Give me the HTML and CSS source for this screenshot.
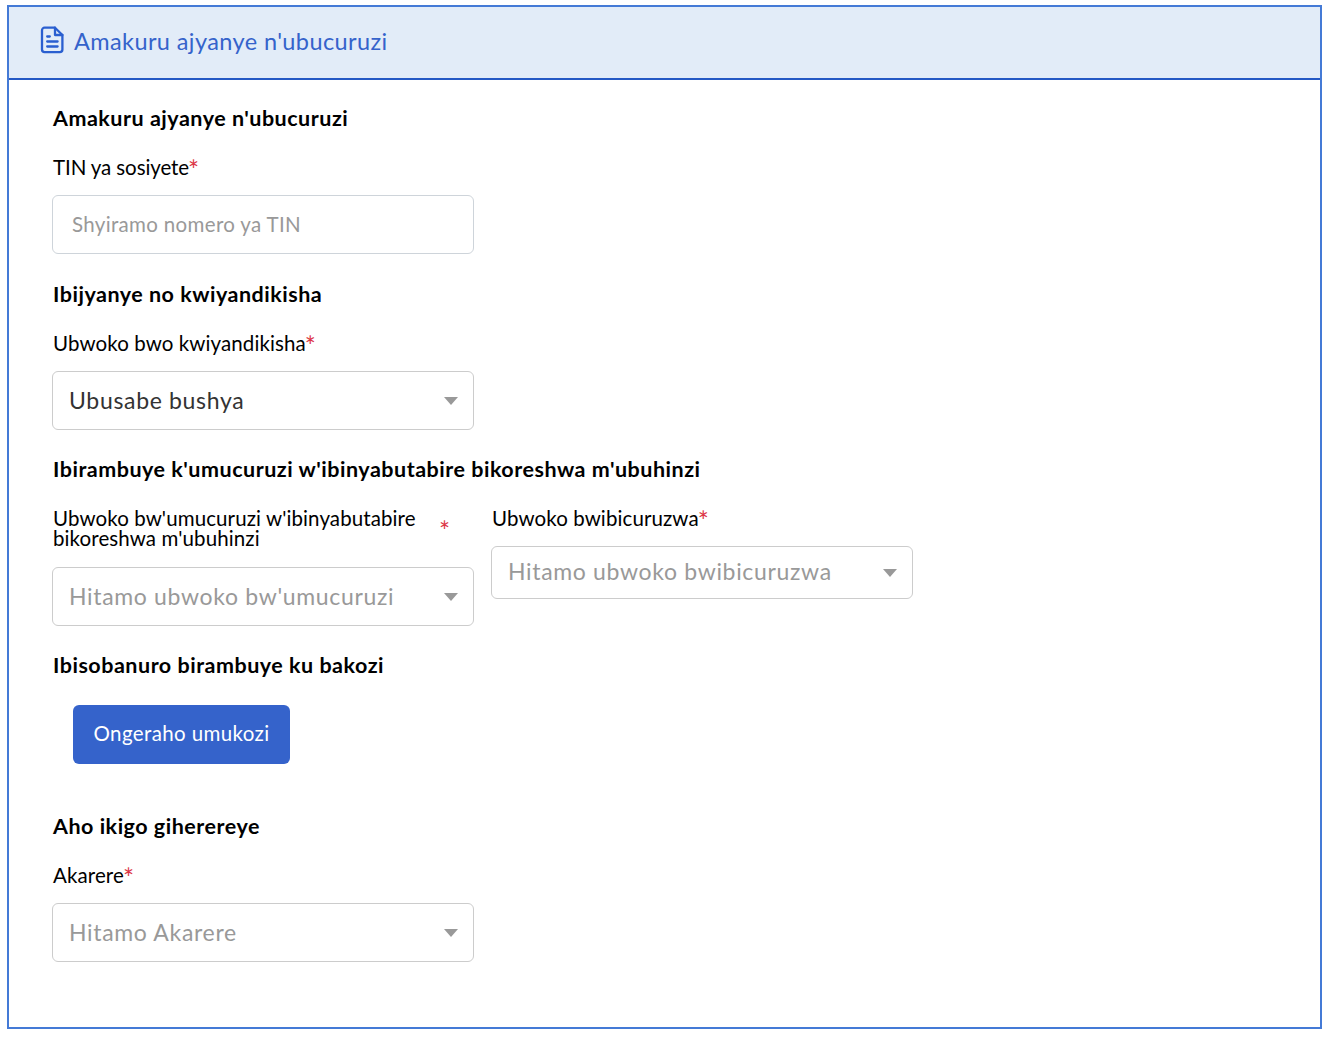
FILE: index.html
```html
<!DOCTYPE html>
<html lang="rw">
<head>
    <meta charset="UTF-8">
    <meta name="viewport" content="width=device-width, initial-scale=1.0">
    <title>Amakuru ajyanye n'ubucuruzi</title>
    <link rel="stylesheet" href="styles.css">
</head>
<body>
    <div class="panel">
        <div class="panel-header">
            <svg class="file-icon" viewBox="0 0 24 28" fill="none" stroke="currentColor" stroke-width="2.3" stroke-linecap="round" stroke-linejoin="round">
                <path d="M15 1.7H4.6A2.6 2.6 0 0 0 2 4.3v19.2a2.6 2.6 0 0 0 2.6 2.6h15.2a2.6 2.6 0 0 0 2.6-2.6V9z"/>
                <path d="M15 1.7V9h7.4M7.2 10.5h2.6M7.2 15.5h10.4M7.2 20.5h10.4"/>
            </svg>
            <span class="panel-title">Amakuru ajyanye n'ubucuruzi</span>
        </div>
        <form class="panel-body">
            <h3>Amakuru ajyanye n'ubucuruzi</h3>
            <div class="field">
                <label for="tin" class="tin-label"><span>TIN ya sosiyete</span><b>*</b></label>
                <input type="text" id="tin" class="control" placeholder="Shyiramo nomero ya TIN">
            </div>

            <h3>Ibijyanye no kwiyandikisha</h3>
            <div class="field type-field">
                <label><span>Ubwoko bwo kwiyandikisha</span><b>*</b></label>
                <div class="control select selected"><span>Ubusabe bushya</span><i class="arrow"></i></div>
            </div>

            <h3>Ibirambuye k'umucuruzi w'ibinyabutabire bikoreshwa m'ubuhinzi</h3>
            <div class="row">
                <div class="field">
                    <label class="long"><span>Ubwoko bw'umucuruzi w'ibinyabutabire bikoreshwa m'ubuhinzi</span><b>*</b></label>
                    <div class="control select"><span>Hitamo ubwoko bw'umucuruzi</span><i class="arrow"></i></div>
                </div>
                <div class="field">
                    <label><span>Ubwoko bwibicuruzwa</span><b>*</b></label>
                    <div class="control select short"><span>Hitamo ubwoko bwibicuruzwa</span><i class="arrow"></i></div>
                </div>
            </div>

            <h3>Ibisobanuro birambuye ku bakozi</h3>
            <button type="button" class="add-btn">Ongeraho umukozi</button>

            <h3>Aho ikigo giherereye</h3>
            <div class="field">
                <label><span>Akarere</span><b>*</b></label>
                <div class="control select"><span>Hitamo Akarere</span><i class="arrow"></i></div>
            </div>
        </form>
    </div>
</body>
</html>
```
FILE: styles.css
```css
* {
    box-sizing: border-box;
}
body {
    margin: 0;
    background: #fff;
    color: #000;
    font-family: Lato, "Open Sans", sans-serif;
}
.panel {
    width: 1315px;
    height: 1024px;
    margin: 5px 0 0 7px;
    border: 2px solid #447ad6;
}
.panel-header {
    display: flex;
    align-items: center;
    height: 73px;
    padding: 0 0 4px 31px;
    background: #e2ecf8;
    border-bottom: 2px solid #2458c4;
    color: #3563cb;
}
.file-icon {
    width: 24px;
    height: 28px;
    margin: 0 10px 1px 0;
    color: #2a5fd0;
}
.panel-title {
    font-size: 23.5px;
    letter-spacing: 0.4px;
}
.panel-body {
    padding: 26px 43px 0;
}
h3 {
    margin: 0 0 27px 1px;
    font-size: 21.5px;
    line-height: 24px;
    letter-spacing: 0.51px;
}
.field {
    width: 422px;
    margin-bottom: 28px;
}
.type-field {
    margin-bottom: 27px;
}
label {
    display: flex;
    margin: 0 0 18px 1px;
    font-size: 20.5px;
    line-height: 20px;
    letter-spacing: 0.1px;
}
label b {
    margin: 0 0 -6px -1px;
    color: #dc3545;
    font-size: 26px;
    font-weight: normal;
    line-height: 26px;
}
.tin-label {
    letter-spacing: -0.1px;
}
.long {
    margin-bottom: 19px;
}
.long span {
    width: 387px;
}
.long b {
    align-self: center;
}
.control {
    display: flex;
    align-items: center;
    justify-content: space-between;
    width: 100%;
    height: 59px;
    padding: 0 15px 0 16px;
    border: 1px solid #ccc;
    border-radius: 6px;
    background: #fff;
    color: #999;
    font-family: inherit;
    font-size: 23px;
    letter-spacing: 0.67px;
}
.select span {
    padding-bottom: 2px;
}
input.control {
    padding: 0 19px 2px;
    border-color: #ced4da;
    font-size: 20.5px;
    letter-spacing: 0.33px;
}
input::placeholder {
    color: #999;
}
.selected {
    color: #333;
}
.short {
    height: 53px;
}
.short span {
    padding-bottom: 3px;
}
.arrow {
    border: 7px solid transparent;
    border-top: 8px solid #999;
    border-bottom: 0;
}
.row {
    display: flex;
    gap: 17px;
}
.row .field {
    margin-bottom: 27px;
}
.add-btn {
    display: block;
    width: 217px;
    height: 59px;
    margin: 28px 0 50px 21px;
    padding: 0 0 3px;
    border: 0;
    border-radius: 6px;
    background: #3563cb;
    color: #fff;
    font-family: inherit;
    font-size: 20.5px;
    letter-spacing: 0.38px;
}
```
